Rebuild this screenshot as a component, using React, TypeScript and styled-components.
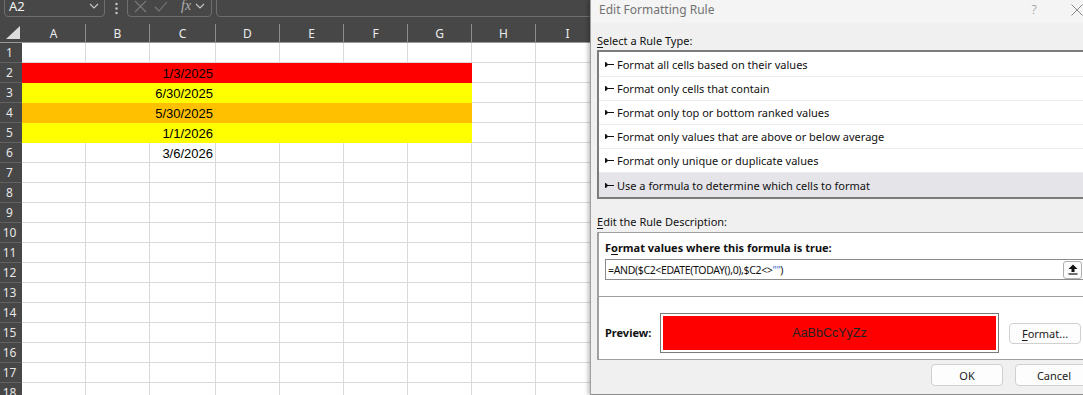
import React from 'react';
import styled, { createGlobalStyle } from 'styled-components';

interface SheetRow {
    n: number;
    fill?: string;
    value?: string;
}

const columns = ['A', 'B', 'C', 'D', 'E', 'F', 'G', 'H', 'I'];

const rows: SheetRow[] = [
    { n: 1 },
    { n: 2, fill: '#ff0000', value: '1/3/2025' },
    { n: 3, fill: '#ffff00', value: '6/30/2025' },
    { n: 4, fill: '#ffc000', value: '5/30/2025' },
    { n: 5, fill: '#ffff00', value: '1/1/2026' },
    { n: 6, value: '3/6/2026' },
    ...Array.from({ length: 12 }, (_, i) => ({ n: i + 7 })),
];

const ruleTypes = [
    'Format all cells based on their values',
    'Format only cells that contain',
    'Format only top or bottom ranked values',
    'Format only values that are above or below average',
    'Format only unique or duplicate values',
    'Use a formula to determine which cells to format',
];

const Chevron = () => (
    <svg width="10" height="6" viewBox="0 0 10 6">
        <path d="M1 1 L5 5 L9 1" fill="none" stroke="#c8c8c8" strokeWidth="1.1" />
    </svg>
);

const RuleArrow = () => (
    <svg width="9" height="7" viewBox="0 0 9 7">
        <path d="M0 1 L3 2.9 L9 2.9 L9 4.1 L3 4.1 L0 6 Z" fill="#111" />
        <rect x="0" y="1.2" width="1.4" height="4.6" fill="#111" />
    </svg>
);

const App: React.FC = () => {
    return (
        <>
            <GlobalStyle />
            <Page>
                <Sheet>
                    <TopBar>
                        <NameBox>
                            <span>A2</span>
                            <Chevron />
                        </NameBox>
                        <Dots>
                            <svg width="3" height="13" viewBox="0 0 3 13">
                                <circle cx="1.5" cy="2" r="1.2" fill="#c8c8c8" />
                                <circle cx="1.5" cy="6.5" r="1.2" fill="#c8c8c8" />
                                <circle cx="1.5" cy="11" r="1.2" fill="#c8c8c8" />
                            </svg>
                        </Dots>
                        <FxBox>
                            <svg width="13" height="13" viewBox="0 0 13 13">
                                <path d="M1 1 L12 12 M12 1 L1 12" stroke="#7a7a7a" strokeWidth="1.1" />
                            </svg>
                            <svg width="14" height="11" viewBox="0 0 14 11">
                                <path d="M1 6 L5 10 L13 1" fill="none" stroke="#7a7a7a" strokeWidth="1.1" />
                            </svg>
                            <FxLabel>fx</FxLabel>
                            <Chevron />
                        </FxBox>
                        <FormulaBox />
                    </TopBar>
                    <Grid>
                        <Corner>
                            <svg width="14" height="13" viewBox="0 0 14 13">
                                <path d="M0 13 L14 13 L14 0 Z" fill="#dcdcdc" />
                            </svg>
                        </Corner>
                        {columns.map((c) => (
                            <ColHeader key={c}>{c}</ColHeader>
                        ))}
                        {rows.map((row) => (
                            <React.Fragment key={row.n}>
                                <RowHeader>{row.n}</RowHeader>
                                {columns.map((c, ci) => {
                                    const fill = ci < 7 ? row.fill : undefined;
                                    return (
                                        <Cell key={c} $fill={fill}>
                                            {c === 'C' ? row.value : null}
                                        </Cell>
                                    );
                                })}
                            </React.Fragment>
                        ))}
                    </Grid>
                </Sheet>

                <Dialog>
                    <TitleBar>
                        <Title>Edit Formatting Rule</Title>
                        <HelpButton>?</HelpButton>
                        <CloseButton>
                            <svg width="12" height="12" viewBox="0 0 12 12">
                                <path d="M0.5 0.5 L11.5 11.5 M11.5 0.5 L0.5 11.5" stroke="#8a8a8a" strokeWidth="1" />
                            </svg>
                        </CloseButton>
                    </TitleBar>
                    <Body>
                        <Label>
                            <u>S</u>elect a Rule Type:
                        </Label>
                        <RuleList>
                            {ruleTypes.map((r, i) => (
                                <RuleItem key={r} $selected={i === ruleTypes.length - 1} $last={i === ruleTypes.length - 1}>
                                    <RuleArrow />
                                    <span>{r}</span>
                                </RuleItem>
                            ))}
                        </RuleList>
                        <Label $gap>
                            <u>E</u>dit the Rule Description:
                        </Label>
                        <DescBox>
                            <DescTop>
                                <BoldLabel>
                                    F<u>o</u>rmat values where this formula is true:
                                </BoldLabel>
                                <FormulaInput>
                                    <FormulaText>
                                        =AND($C2&lt;EDATE(TODAY(),0),$C2&lt;&gt;<Quote>""</Quote>)
                                    </FormulaText>
                                    <CollapseButton>
                                        <svg width="10" height="11" viewBox="0 0 10 11">
                                            <path d="M5 0.5 L9.5 5 H6.5 V8 H3.5 V5 H0.5 Z" fill="#111" />
                                            <path d="M0.5 10 H9.5" stroke="#111" strokeWidth="1.2" />
                                        </svg>
                                    </CollapseButton>
                                </FormulaInput>
                            </DescTop>
                            <PreviewRow>
                                <BoldLabel $width={55}>Preview:</BoldLabel>
                                <PreviewFrame>
                                    <PreviewFill>AaBbCcYyZz</PreviewFill>
                                </PreviewFrame>
                                <DialogButton $width={72}>
                                    <u>F</u>ormat...
                                </DialogButton>
                            </PreviewRow>
                        </DescBox>
                        <ButtonRow>
                            <DialogButton $width={72}>OK</DialogButton>
                            <DialogButton $width={78}>Cancel</DialogButton>
                        </ButtonRow>
                    </Body>
                </Dialog>
            </Page>
        </>
    );
};

const GlobalStyle = createGlobalStyle`
    html, body {
        margin: 0;
        padding: 0;
        background: #ffffff;
    }
    body {
        width: 1083px;
        height: 395px;
        overflow: hidden;
    }
    u {
        text-decoration-thickness: 1px;
        text-underline-offset: 2px;
    }
`;

const Page = styled.div`
    display: flex;
    width: 1083px;
    height: 395px;
    overflow: hidden;
`;

const Sheet = styled.div`
    flex: 0 0 590px;
    display: flex;
    flex-direction: column;
    background: #474747;
    overflow: hidden;
`;

const TopBar = styled.div`
    height: 23px;
    flex: 0 0 23px;
    display: flex;
    align-items: flex-start;
    padding-left: 4px;
    overflow: hidden;
`;

const BarBox = styled.div`
    box-sizing: border-box;
    height: 22px;
    margin-top: -5px;
    border: 1px solid #6e6e6e;
    border-radius: 4px;
    display: flex;
    align-items: center;
`;

const NameBox = styled(BarBox)`
    width: 101px;
    padding: 0 5px 0 4px;
    justify-content: space-between;
    color: #f2f2f2;
    font: 13px 'Noto Sans', sans-serif;
`;

const Dots = styled.div`
    width: 22px;
    height: 16px;
    display: flex;
    align-items: center;
    justify-content: center;
`;

const FxBox = styled(BarBox)`
    width: 85px;
    padding: 0 3px 0 6px;
    gap: 7px;
`;

const FxLabel = styled.span`
    font: italic 14px 'Liberation Serif', serif;
    color: #b0b0b0;
    margin-left: 6px;
    margin-right: -3px;
`;

const FormulaBox = styled(BarBox)`
    flex: 1;
    margin-left: 4px;
    margin-right: -10px;
`;

const Grid = styled.div`
    display: grid;
    grid-template-columns: 22px 64px 64px 66px repeat(6, 64px);
    grid-auto-rows: 20px;
    font-family: 'Noto Sans', sans-serif;
`;

const Corner = styled.div`
    box-sizing: border-box;
    border-bottom: 1px solid #9a9a9a;
    display: flex;
    align-items: flex-end;
    justify-content: flex-end;
    padding: 0 2px 3px 0;
`;

const ColHeader = styled.div`
    box-sizing: border-box;
    border-right: 1px solid #8c8c8c;
    border-bottom: 1px solid #9a9a9a;
    color: #ececec;
    font-size: 12px;
    line-height: 20px;
    text-align: center;
    margin-top: 1px;
    height: 19px;
`;

const RowHeader = styled.div`
    box-sizing: border-box;
    border-bottom: 1px solid #626262;
    color: #e6e6e6;
    font-size: 12px;
    line-height: 20px;
    text-align: center;
    padding-right: 3px;
`;

const Cell = styled.div<{ $fill?: string }>`
    box-sizing: border-box;
    background: ${({ $fill }) => $fill ?? '#ffffff'};
    border-right: 1px solid ${({ $fill }) => $fill ?? '#dadada'};
    border-bottom: 1px solid ${({ $fill }) => $fill ?? '#dadada'};
    color: #000000;
    font: 13px 'Liberation Sans', Arial, sans-serif;
    line-height: 21px;
    text-align: right;
    padding-right: 2px;
    white-space: nowrap;
`;

const Dialog = styled.div`
    flex: 0 0 510px;
    box-sizing: border-box;
    height: 395px;
    display: flex;
    flex-direction: column;
    background: #f0f0f0;
    border-left: 1px solid #a0a0a0;
    border-bottom: 1px solid #8a8a8a;
    box-shadow: -2px 0 4px rgba(0, 0, 0, 0.25);
    position: relative;
    z-index: 1;
    font-family: 'Noto Sans', sans-serif;
    font-size: 11px;
    color: #111111;
`;

const TitleBar = styled.div`
    height: 23px;
    flex: 0 0 23px;
    display: flex;
    align-items: flex-start;
    background: #f4f4f4;
    padding-left: 8px;
`;

const Title = styled.div`
    flex: 1;
    font-size: 12px;
    line-height: 19px;
    color: #727272;
`;

const HelpButton = styled.div`
    width: 40px;
    text-align: center;
    font-size: 13px;
    line-height: 19px;
    color: #8a8a8a;
    font-weight: 300;
`;

const CloseButton = styled.div`
    width: 46px;
    height: 19px;
    display: flex;
    align-items: center;
    justify-content: center;
`;

const Body = styled.div`
    display: flex;
    flex-direction: column;
    padding: 9px 7px 0 6px;
`;

const Label = styled.div<{ $gap?: boolean }>`
    height: ${({ $gap }) => ($gap ? '20px' : '18px')};
    line-height: ${({ $gap }) => ($gap ? '20px' : '18px')};
    margin-top: ${({ $gap }) => ($gap ? '13px' : '0')};
`;

const RuleList = styled.div`
    box-sizing: border-box;
    background: #ffffff;
    border: 2px solid #7c7c7c;
    border-right: none;
    padding-top: 1px;
`;

interface RuleItemProps {
    $selected: boolean;
    $last: boolean;
}

const RuleItem = styled.div<RuleItemProps>`
    box-sizing: border-box;
    height: 24px;
    display: flex;
    align-items: center;
    gap: 3px;
    padding-left: 6px;
    background: ${({ $selected }) => ($selected ? '#e4e4e9' : '#ffffff')};
    border-bottom: ${({ $last }) => ($last ? 'none' : '1px solid #ececec')};
`;

const DescBox = styled.div`
    background: #ffffff;
    border: 1px solid #a0a0a0;
    border-left-width: 2px;
    border-right: none;
`;

const DescTop = styled.div`
    padding: 7px 9px 16px 6px;
    border-bottom: 1px solid #a0a0a0;
`;

const BoldLabel = styled.div<{ $width?: number }>`
    font-weight: 700;
    line-height: 16px;
    margin-bottom: 3px;
    width: ${({ $width }) => ($width ? `${$width}px` : 'auto')};
    flex: ${({ $width }) => ($width ? '0 0 auto' : 'none')};
    ${({ $width }) => ($width ? 'margin-bottom: 0;' : '')}
`;

const FormulaInput = styled.div`
    box-sizing: border-box;
    height: 21px;
    display: flex;
    align-items: center;
    border: 1px solid #8a8a8a;
    border-right: none;
    padding-left: 2px;
`;

const FormulaText = styled.div`
    flex: 1;
    font-size: 10.5px;
    letter-spacing: -0.35px;
`;

const Quote = styled.span`
    color: #3c6fd0;
`;

const CollapseButton = styled.div`
    box-sizing: border-box;
    width: 19px;
    height: 18px;
    margin-right: 2px;
    border: 1px solid #b0b0b0;
    border-radius: 3px;
    background: #fbfbfb;
    display: flex;
    align-items: center;
    justify-content: center;
`;

const PreviewRow = styled.div`
    display: flex;
    align-items: center;
    padding: 16px 12px 6px 6px;
`;

const PreviewFrame = styled.div`
    box-sizing: border-box;
    flex: 1;
    height: 40px;
    border: 1px solid #7a7a7a;
    padding: 2px;
    display: flex;
`;

const PreviewFill = styled.div`
    flex: 1;
    background: #ff0000;
    display: flex;
    align-items: center;
    justify-content: center;
    font: 12.5px 'Liberation Sans', Arial, sans-serif;
    color: #222222;
`;

const DialogButton = styled.button<{ $width: number }>`
    box-sizing: border-box;
    width: ${({ $width }) => $width}px;
    height: 21px;
    margin-left: 10px;
    padding: 0;
    background: #fdfdfd;
    border: 1px solid #d0d0d0;
    border-radius: 4px;
    font-family: 'Noto Sans', sans-serif;
    font-size: 11px;
    color: #1a1a1a;
`;

const ButtonRow = styled.div`
    display: flex;
    justify-content: flex-end;
    gap: 2px;
    margin-top: 4px;

    & > button {
        height: 22px;
    }
`;

export default App;
